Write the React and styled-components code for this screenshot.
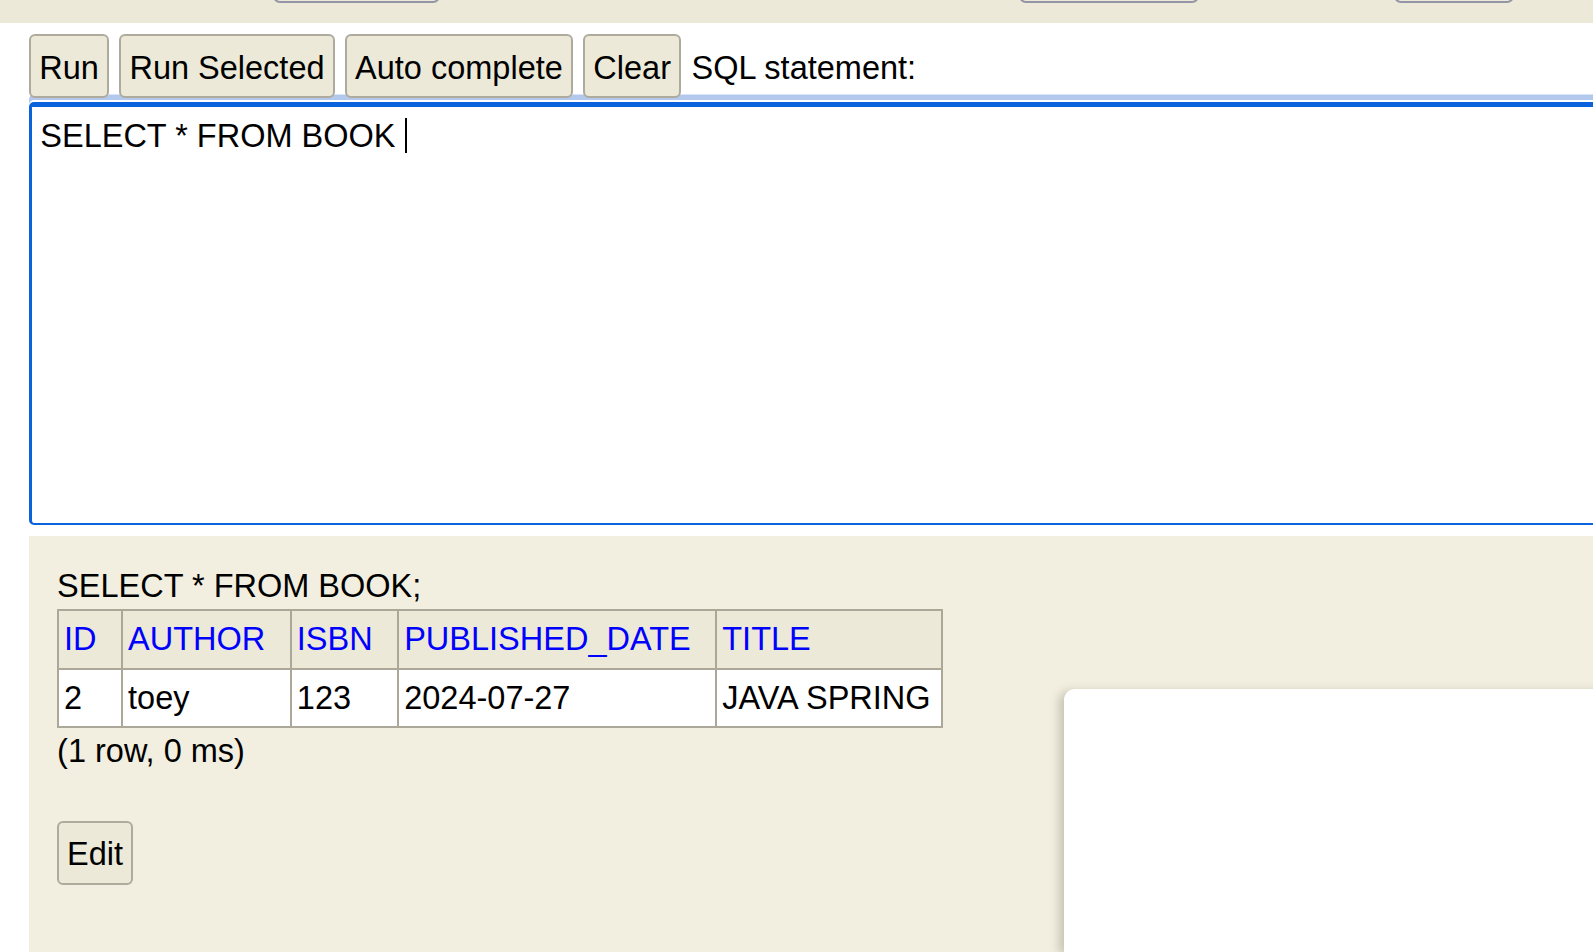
import React from 'react';
import styled, { createGlobalStyle } from 'styled-components';

const GlobalStyle = createGlobalStyle`
html, body {
	margin: 0;
	padding: 0;
	background: #fff;
	overflow: hidden;
}
body {
	font-family: "Liberation Sans", Arial, sans-serif;
	font-size: 32.5px;
	color: #000;
}
`;

const Page = styled.div`
height: 100vh;
display: flex;
flex-direction: column;
overflow: hidden;
`;

const TopBar = styled.div`
height: 22.7px;
flex-shrink: 0;
background: #ece9d8;
display: flex;
align-items: flex-start;
overflow: hidden;
`;

const FrameButton = styled.div`
margin-top: -40px;
margin-left: ${(p) => p.$gap}px;
width: ${(p) => p.$width}px;
height: 43px;
box-sizing: border-box;
border: 2px solid #9394a6;
border-radius: 7px;
background: #ece9d8;
`;

const Main = styled.div`
flex: 1;
display: flex;
flex-direction: column;
padding-left: 29.3px;
margin-right: -80px;
min-height: 0;
`;

const Toolbar = styled.div`
margin-top: 11.6px;
height: 64px;
display: flex;
align-items: center;
gap: 10.5px;
`;

const Button = styled.button`
position: relative;
z-index: 1;
height: 64px;
box-sizing: border-box;
padding: 4px 8px 0;
margin: ${(p) => p.$margin || '0'};
border: 2px solid #aeab9e;
border-radius: 6px;
background: #ece9d8;
font-family: inherit;
font-size: 32.5px;
line-height: 1;
color: #000;
cursor: pointer;
`;

const Label = styled.span`
padding-top: 4px;
white-space: nowrap;
`;

const Editor = styled.div`
margin-top: 3.4px;
height: 423px;
flex-shrink: 0;
box-sizing: border-box;
border: 3px solid #0a62dc;
border-top-width: 5px;
border-bottom-width: 2.5px;
border-radius: 5px;
padding: 11.5px 7px 0 8px;
white-space: pre;
box-shadow: 0 -2px 0 0 #fff, 0 -7.5px 0 0 #b2c8ec;
`;

const Caret = styled.span`
display: inline-block;
width: 2px;
height: 35px;
background: #000;
vertical-align: -6px;
`;

const Results = styled.div`
position: relative;
flex: 1;
margin-top: 11.3px;
background: #f2efe0;
padding: 32.5px 0 0 27.8px;
`;

const Query = styled.div`
line-height: 37.3px;
`;

const Table = styled.table`
margin-top: 3.5px;
border-collapse: collapse;
font-size: 32.5px;
`;

const Th = styled.th`
padding: 10px 24.5px 9px 5px;
border: 2px solid #aca899;
background: #ece9d8;
color: #0000ff;
font-weight: normal;
text-align: left;
white-space: nowrap;
line-height: 37.3px;
`;

const Td = styled.td`
padding: 10px 10px 9px 5px;
border: 2px solid #aca899;
background: #fff;
white-space: nowrap;
line-height: 37.3px;
`;

const Meta = styled.div`
margin-top: 5.5px;
line-height: 37.3px;
`;

const Popup = styled.div`
position: absolute;
left: 1035px;
top: 153.5px;
right: 0;
bottom: 0;
background: #fff;
border-top-left-radius: 11px;
box-shadow: -5px 2px 10px rgba(90, 85, 60, 0.28);
`;

const columns = ['ID', 'AUTHOR', 'ISBN', 'PUBLISHED_DATE', 'TITLE'];
const rows = [['2', 'toey', '123', '2024-07-27', 'JAVA SPRING']];

const App = () => {
	return (
		<>
			<GlobalStyle />
			<Page>
				<TopBar>
					<FrameButton $gap={273} $width={167} />
					<FrameButton $gap={579} $width={180} />
					<FrameButton $gap={195} $width={120} />
				</TopBar>
				<Main>
					<Toolbar>
						<Button>Run</Button>
						<Button>Run Selected</Button>
						<Button>Auto complete</Button>
						<Button>Clear</Button>
						<Label>SQL statement:</Label>
					</Toolbar>
					<Editor>
						{'SELECT * FROM BOOK '}
						<Caret />
					</Editor>
					<Results>
						<Query>SELECT * FROM BOOK;</Query>
						<Table>
							<thead>
								<tr>
									{columns.map((c) => (
										<Th key={c}>{c}</Th>
									))}
								</tr>
							</thead>
							<tbody>
								{rows.map((r, i) => (
									<tr key={i}>
										{r.map((v, j) => (
											<Td key={j}>{v}</Td>
										))}
									</tr>
								))}
							</tbody>
						</Table>
						<Meta>(1 row, 0 ms)</Meta>
						<Button $margin="50px 0 0 0">Edit</Button>
						<Popup />
					</Results>
				</Main>
			</Page>
		</>
	);
};

export default App;
